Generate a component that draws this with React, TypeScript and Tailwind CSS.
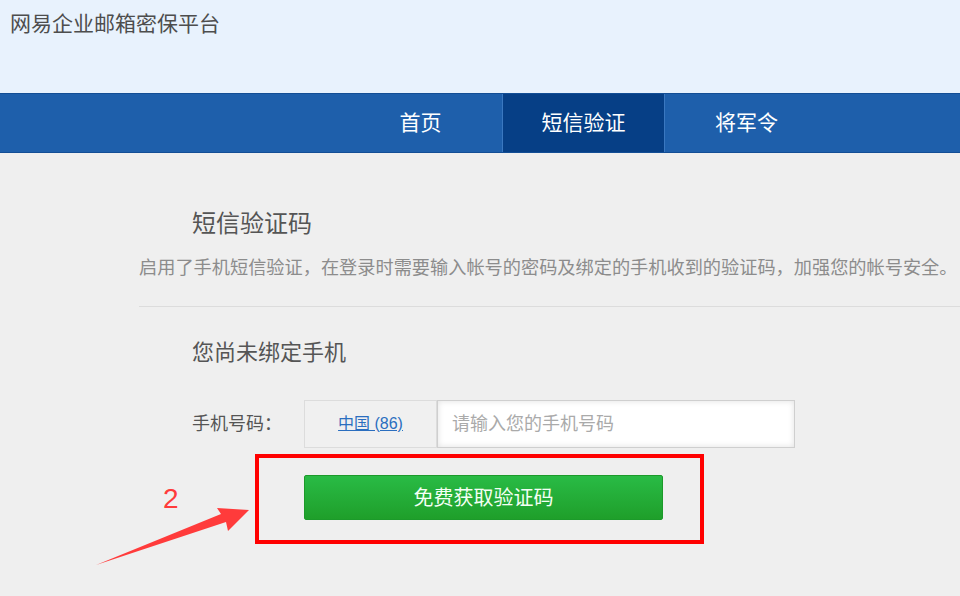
export default function App() {
  const tabs = ["首页", "短信验证", "将军令"];
  const active = 1;

  return (
    <div className="relative min-h-screen w-[960px] overflow-hidden bg-[#efefef] font-['Liberation_Sans','Noto_Sans_CJK_SC',sans-serif]">
      {/* header */}
      <header className="h-[93px] bg-[#e8f2fd] pl-[10px] pt-[9px]">
        <h1 className="text-[21px] leading-[30px] text-[#4d4d4d]">网易企业邮箱密保平台</h1>
      </header>

      {/* nav */}
      <nav className="flex h-[60px] border-y border-[#134e95] bg-[#1e5fab] pl-[339px]">
        {tabs.map((t, i) => (
          <a
            key={t}
            href="#"
            className={
              i === active
                ? "flex h-full w-[163px] items-center justify-center border-x border-[#3a78c0] bg-[#063f86] text-[21px] text-white"
                : "flex h-full w-[163px] items-center justify-center text-[21px] text-white"
            }
          >
            {t}
          </a>
        ))}
      </nav>

      {/* content */}
      <main className="pl-[139px] pt-[55px]">
        <h2 className="pl-[53px] text-[24px] leading-[32px] text-[#555]">短信验证码</h2>
        <p className="mt-[15px] whitespace-nowrap text-[18.2px] leading-[26px] text-[#8c8c8c]">
          启用了手机短信验证，在登录时需要输入帐号的密码及绑定的手机收到的验证码，加强您的帐号安全。
        </p>
        <div className="mt-[25px] h-px bg-[#dcdcdc]" />

        <div className="pl-[53px]">
          <h3 className="mt-[31px] text-[22px] leading-[30px] text-[#555]">您尚未绑定手机</h3>

          <div className="mt-[32px] flex items-center">
            <span className="w-[112px] text-[18px] text-[#555]">手机号码：</span>
            <div className="flex h-[48px] w-[133px] items-center justify-center border border-[#dcdcdc] bg-[#f0f0f0]">
              <a href="#" className="text-[16px] text-[#2a6ebf] underline">
                中国 (86)
              </a>
            </div>
            <div className="flex h-[48px] w-[358px] items-center border border-[#cfcfcf] bg-white pl-[14px] text-[18px] text-[#aaa] shadow-[inset_0_0_6px_rgba(0,0,0,0.12)]">
              请输入您的手机号码
            </div>
          </div>
        </div>

        <div className="ml-[116px] mt-[6px] w-[449px] border-[4px] border-[#ff0000] pb-[20px] pl-[45px] pt-[17px]">
          <button className="flex h-[45px] w-[359px] items-center justify-center rounded-[2px] border border-[#1c9a2a] bg-gradient-to-b from-[#29bb45] to-[#1f9f2a] text-[20px] text-[#f4fff4]">
            免费获取验证码
          </button>
        </div>
      </main>

      {/* annotation */}
      <span className="absolute left-[163px] top-[481px] text-[28px] leading-[36px] text-[#ff3b3b]">2</span>
      <svg className="pointer-events-none absolute left-0 top-0" width="960" height="596" viewBox="0 0 960 596">
        <polygon points="96,565 221,514 217,508 249,510 228,531 226,522" fill="#ff3b3b" />
      </svg>
    </div>
  );
}
